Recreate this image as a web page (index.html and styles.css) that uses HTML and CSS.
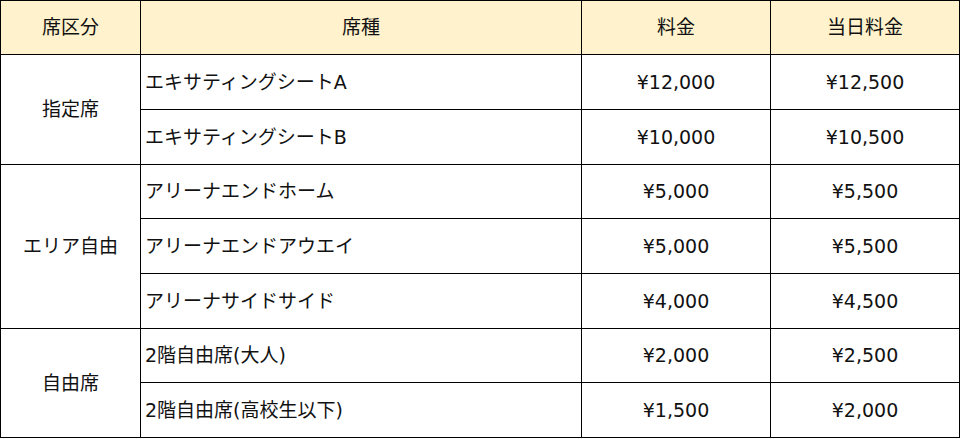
FILE: index.html
```html
<!DOCTYPE html>
<html lang="ja">
<head>
<meta charset="utf-8">
<link rel="stylesheet" href="styles.css">
</head>
<body>
<table class="price-table">
  <colgroup>
    <col class="c-cat">
    <col class="c-seat">
    <col class="c-price">
    <col class="c-day">
  </colgroup>
  <thead>
    <tr class="head-row">
      <th>席区分</th>
      <th>席種</th>
      <th>料金</th>
      <th>当日料金</th>
    </tr>
  </thead>
  <tbody>
    <tr class="r-tall">
      <td class="cat" rowspan="2">指定席</td>
      <td class="seat">エキサティングシートA</td>
      <td class="num">¥12,000</td>
      <td class="num">¥12,500</td>
    </tr>
    <tr class="r-tall">
      <td class="seat">エキサティングシートB</td>
      <td class="num">¥10,000</td>
      <td class="num">¥10,500</td>
    </tr>
    <tr class="r-short">
      <td class="cat" rowspan="3">エリア自由</td>
      <td class="seat">アリーナエンドホーム</td>
      <td class="num">¥5,000</td>
      <td class="num">¥5,500</td>
    </tr>
    <tr class="r-tall">
      <td class="seat">アリーナエンドアウエイ</td>
      <td class="num">¥5,000</td>
      <td class="num">¥5,500</td>
    </tr>
    <tr class="r-tall">
      <td class="seat">アリーナサイドサイド</td>
      <td class="num">¥4,000</td>
      <td class="num">¥4,500</td>
    </tr>
    <tr class="r-short">
      <td class="cat" rowspan="2">自由席</td>
      <td class="seat">2階自由席(大人)</td>
      <td class="num">¥2,000</td>
      <td class="num">¥2,500</td>
    </tr>
    <tr class="r-tall">
      <td class="seat">2階自由席(高校生以下)</td>
      <td class="num">¥1,500</td>
      <td class="num">¥2,000</td>
    </tr>
  </tbody>
</table>
</body>
</html>
```

FILE: styles.css
```css
html, body {
  margin: 0;
  padding: 0;
  background: #ffffff;
}

.price-table {
  border-collapse: collapse;
  table-layout: fixed;
  width: 959px;
  font-family: "DejaVu Sans", "Noto Sans CJK JP", sans-serif;
  font-size: 19px;
  color: #111111;
}

.c-cat { width: 140px; }
.c-seat { width: 441px; }
.c-price { width: 189px; }
.c-day { width: 189px; }

.price-table th,
.price-table td {
  border: 1px solid #000;
  padding: 0;
  text-align: center;
  vertical-align: middle;
  font-weight: normal;
  line-height: 1;
}

.head-row th {
  background: #fff2cc;
  height: 53px;
}

.r-tall td { height: 54px; }
.r-short td { height: 53px; }

.price-table td.seat {
  text-align: left;
  padding-left: 4px;
}
```
